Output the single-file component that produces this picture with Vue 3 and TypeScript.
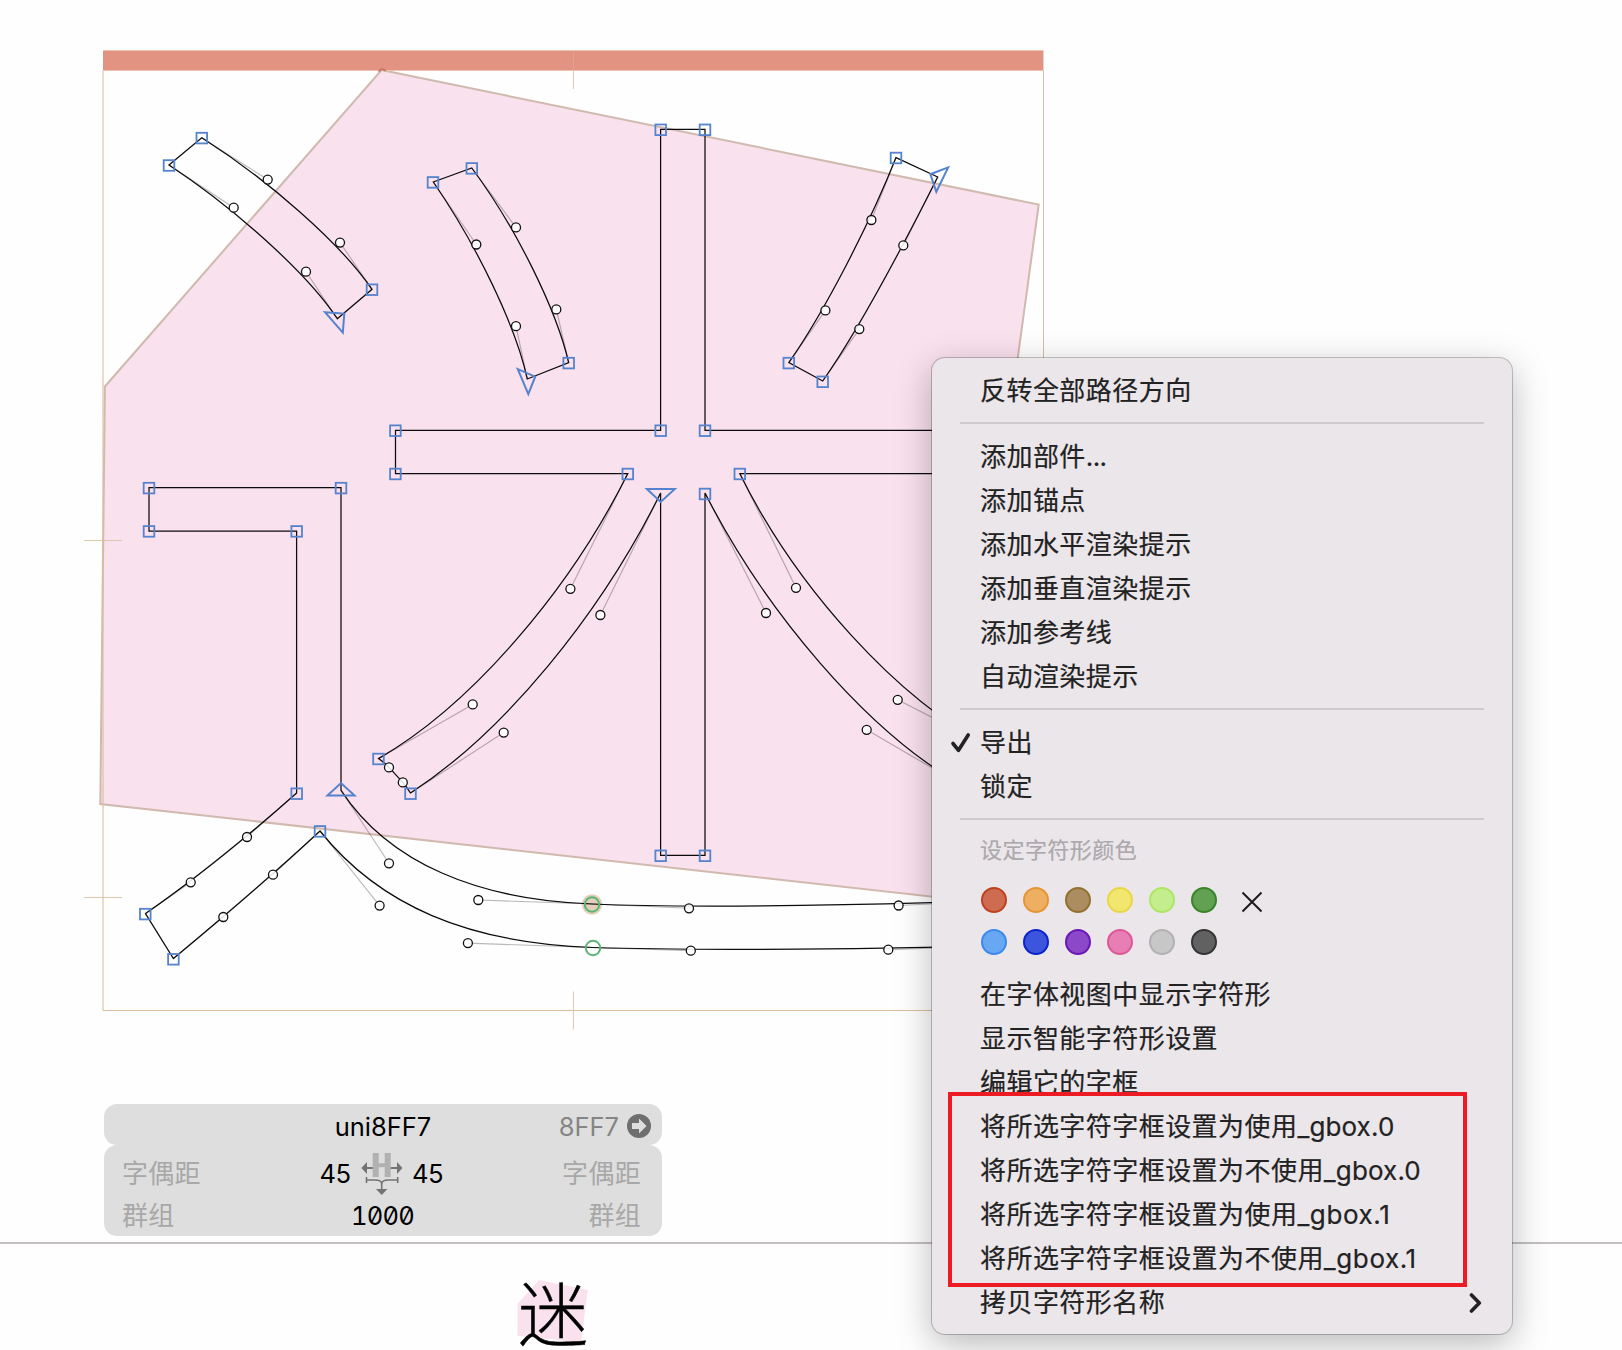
<script setup lang="ts">
type Point = [number, number]

interface Swatch {
  fill: string
  ring: string
}

const nodes: Point[] = [
  [201.8, 138.1], [169, 165.5], [372, 289.7],
  [433, 182.4], [471.8, 168.4], [568.7, 363.1],
  [896, 158], [822.7, 381.8], [788.8, 363.1],
  [660.7, 129.8], [705, 129.8], [660.7, 430.7], [705, 430.7],
  [395.4, 430.7], [395.4, 474], [627.8, 474], [739.8, 474],
  [705, 494], [660.7, 855.8], [705, 855.8],
  [378.5, 759], [410.5, 793.7],
  [149, 488.1], [341, 488.1], [149, 531.4], [296.7, 531.4],
  [296.7, 793.7], [145.3, 914.1], [173.4, 959.3], [320, 831.4],
]

/** Off-curve point followed by the on-curve point it belongs to. */
const handles: [Point, Point][] = [
  [[267.7, 179.6], [201.8, 137.7]],
  [[340, 242.6], [372, 289.3]],
  [[306, 271.7], [337.3, 318.7]],
  [[233.7, 207.7], [169, 165]],
  [[516, 227.4], [471.8, 168]],
  [[556.3, 309.4], [568.7, 362.7]],
  [[516, 326.2], [527.3, 379]],
  [[476.3, 244.5], [433.3, 182]],
  [[903.3, 245.4], [937.7, 177]],
  [[859.3, 329.1], [822.7, 381]],
  [[825.4, 310.4], [788.8, 362.6]],
  [[871.4, 220], [896, 157.6]],
  [[570.4, 588.8], [627.8, 473.5]],
  [[472.7, 704.4], [378.5, 758.6]],
  [[389, 767.4], [378.5, 758.6]],
  [[402.8, 782.4], [410.5, 793]],
  [[503.7, 732.6], [410.5, 793]],
  [[600.4, 615], [660.7, 493]],
  [[796, 587.8], [739.8, 473.5]],
  [[897.7, 699.8], [990, 747]],
  [[866.7, 729.8], [958, 783]],
  [[766, 613], [705, 493]],
  [[247, 837], [296.7, 793]],
  [[190.7, 882.3], [145.5, 913.6]],
  [[223.3, 917], [173.4, 958.6]],
  [[273, 874.7], [320, 831]],
  [[379.6, 905.6], [320, 831]],
  [[467.9, 943.1], [593, 947.5]],
  [[690.8, 950.7], [593, 947.5]],
  [[888.3, 949.7], [1040, 944]],
  [[389, 863.3], [341, 790.3]],
  [[478.3, 900], [592.3, 904]],
  [[689, 908.3], [592.3, 904]],
  [[898.6, 905.5], [1050, 898]],
]

const starts: string[] = [
  '325,312.2 344.3,313.6 342.8,332.6',
  '517.8,369.2 535.2,376.7 528.3,394.2',
  '948.2,167.4 930.4,174.2 936.3,191.8',
  '646.9,489 674.8,489 660.7,502',
  '327.5,795.4 354.5,795.4 341,783',
]

const outlines: string[] = [
  'M201.8 137.7C267.7 179.6 340 242.6 372 289.3L337.3 318.7C306 271.7 233.7 207.7 169 165Z',
  'M471.8 168C516 227.4 556.3 309.4 568.7 362.7L527.3 379C516 326.2 476.3 244.5 433.3 182Z',
  'M896 157.6L937.7 177C903.3 245.4 859.3 329.1 822.7 381L788.8 362.6C825.4 310.4 871.4 220 896 157.6Z',
  'M660.6 129.4H705V430.4H1010V473.5H739.8C796 587.8 897.7 699.8 990 747L958 783C866.7 729.8 766 613 705 493V855.4H660.6V493C600.4 615 503.7 732.6 410.5 793C408 789 406 786 402.8 782.4L389 767.4C386 764 382 761 378.5 758.6C472.7 704.4 570.4 588.8 627.8 473.5H395.5V430.4H660.6Z',
  'M149 487.5H341V790.3C389 863.3 478.3 900 592.3 904C689 908.3 898.6 905.5 1050 898V944C888.3 949.7 690.8 950.7 593 947.5C467.9 943.1 379.6 905.6 320 831C273 874.7 223.3 917 173.4 958.6L145.5 913.6C190.7 882.3 247 837 296.6 793V531H149Z',
]

const pathItems = ['添加锚点', '添加水平渲染提示', '添加垂直渲染提示', '添加参考线', '自动渲染提示']
const viewItems = ['在字体视图中显示字符形', '显示智能字符形设置', '编辑它的字框']
const boxItems = [
  { label: '将所选字符字框设置为使用', target: '_gbox.0', narrow: false },
  { label: '将所选字符字框设置为不使用', target: '_gbox.0', narrow: false },
  { label: '将所选字符字框设置为使用', target: '_gbox.1', narrow: true },
  { label: '将所选字符字框设置为不使用', target: '_gbox.1', narrow: true },
]

const swatches: Swatch[] = [
  { fill: '#cd6c50', ring: '#be4222' },
  { fill: '#eeaf62', ring: '#e69534' },
  { fill: '#ab8d5f', ring: '#937031' },
  { fill: '#f1e76e', ring: '#e8d744' },
  { fill: '#c4ee8e', ring: '#ade664' },
  { fill: '#62a053', ring: '#398426' },
  { fill: '#68a7f2', ring: '#3b89ea' },
  { fill: '#3d55dc', ring: '#0b23cc' },
  { fill: '#8b48c8', ring: '#6a17b8' },
  { fill: '#e87fb4', ring: '#dd5798' },
  { fill: '#c7c7c7', ring: '#b1b1b1' },
  { fill: '#616161', ring: '#343434' },
]
</script>

<template>
  <main class="editor">
    <svg class="canvas" width="1622" height="1104" viewBox="0 0 1622 1104">
      <path class="glyph-box" d="M381.5 70L1038.7 204.6L944 898L100.3 804L104.9 386.5Z" />
      <g class="metrics">
        <path d="M103 70V1010.5" stroke-width="2" opacity=".55" />
        <path d="M1043.5 70V1010.5M103 1010.5H1043.5" />
        <path d="M573.4 991.5V1029.5M84 540.5H122M84 897.5H122" opacity=".85" />
      </g>
      <rect x="103" y="50" width="940.3" height="21" fill="#ecc4b0" />
      <rect class="zone" x="103" y="51" width="940.3" height="19" />
      <path d="M378.500 71.500L381.500 69L386 70.500" class="vertex" />
      <path class="metrics" d="M573.4 51V71" opacity=".4" />
      <path class="metrics" d="M573.4 71V89" opacity=".85" />

      <circle class="selected" cx="592" cy="904.5" r="10.2" />
      <g class="handle-lines">
        <line v-for="([h, n], i) in handles" :key="i" :x1="h[0]" :y1="h[1]" :x2="n[0]" :y2="n[1]" />
      </g>
      <path v-for="d in outlines" :key="d" class="outline" :d="d" />
      <circle v-for="([h], i) in handles" :key="i" class="handle" :cx="h[0]" :cy="h[1]" r="4.5" />
      <rect v-for="(n, i) in nodes" :key="i" class="node" :x="n[0] - 5.3" :y="n[1] - 5.3" width="10.6" height="10.6" />
      <polygon v-for="p in starts" :key="p" class="node start" :points="p" />
      <circle class="smooth" cx="592" cy="904.5" r="7.2" />
      <circle class="smooth" cx="593" cy="948" r="7.2" />
    </svg>

    <section class="info">
      <header class="info-head">
        <span class="name">uni8FF7</span>
        <span class="code">8FF7</span>
        <svg class="go" width="24" height="24" viewBox="0 0 24 24">
          <circle cx="12" cy="12" r="12" fill="#6f6f6f" />
          <path d="M5 9H12V4.500L19.600 12L12 19.500V15H5Z" fill="#dedede" />
        </svg>
      </header>
      <div class="info-body">
        <div class="info-row">
          <span class="dim">字偶距</span>
          <span class="bearings">
            <b>45</b>
            <svg width="42" height="44" viewBox="0 0 42 44">
              <path d="M11.700 1H17.700V11.200H23.700V1H29.700V25H23.700V15.200H17.700V25H11.700Z" fill="#b1b1b1" />
              <g fill="#737373">
                <path d="M.4 16L6 10V15H11.700V17H6V22Z" />
                <path d="M41.400 16L36 10V15H29.700V17H36V22Z" />
                <path d="M15 37H26.400L20.700 43Z" />
              </g>
              <path d="M5.500 25V31M36.700 25V31M5.500 28H14Q20.700 28 20.700 32V38M36.700 28H27.500Q20.700 28 20.700 32" fill="none" stroke="#737373" stroke-width="1.600" />
            </svg>
            <b>45</b>
          </span>
          <span class="dim">字偶距</span>
        </div>
        <div class="info-row second">
          <span class="dim">群组</span>
          <b>1000</b>
          <span class="dim">群组</span>
        </div>
      </div>
    </section>

    <section class="preview">
      <div class="sample">
        <svg width="74" height="70" viewBox="0 0 74 70">
          <path d="M23.800 5L72.700 15L66 67.500L2.400 60.700L2.700 28.800Z" fill="#f9e1ed" />
        </svg>
        <span class="sample-char">迷</span>
      </div>
    </section>

    <nav class="menu">
      <div class="item">反转全部路径方向</div>
      <hr />
      <div class="item">添加部件<span class="dots">...</span></div>
      <div v-for="t in pathItems" :key="t" class="item">{{ t }}</div>
      <hr />
      <div class="item">
        <svg class="check" width="22" height="22" viewBox="0 0 22 22"><path d="M3 11.500L8.500 18.300L18.200 3" /></svg>
        导出
      </div>
      <div class="item">锁定</div>
      <hr />
      <div class="caption">设定字符形颜色</div>
      <div class="palette">
        <div class="swatches">
          <i v-for="s in swatches" :key="s.fill" :style="{ background: s.fill, borderColor: s.ring }"></i>
        </div>
        <svg class="clear" width="22" height="22" viewBox="0 0 22 22"><path d="M1.500 1.500L20.500 20.500M20.500 1.500L1.500 20.500" /></svg>
      </div>
      <div v-for="t in viewItems" :key="t" class="item">{{ t }}</div>
      <div v-for="(b, i) in boxItems" :key="i" class="item">{{ b.label }}<span class="latin" :class="{ narrow: b.narrow }">{{ b.target }}</span></div>
      <div class="item">
        拷贝字符形名称
        <svg class="chevron" width="14" height="22" viewBox="0 0 14 22"><path d="M2.500 3L10.300 11L2.500 19" /></svg>
      </div>
      <div class="callout"></div>
    </nav>
  </main>
</template>

<style>
body {
  margin: 0;
  background: #fefefe;
}
</style>

<style scoped>
.editor {
  position: relative;
  width: 1622px;
  height: 1350px;
  overflow: hidden;
  background: #fefefe;
  font-family: Inter, "Noto Sans CJK SC", sans-serif;
}
.canvas {
  display: block;
}
.metrics {
  fill: none;
  stroke: #d9bfa0;
  stroke-width: 1;
}
.zone {
  fill: #e29381;
}
.vertex {
  fill: none;
  stroke: #c97762;
  stroke-width: 2;
}
.glyph-box {
  fill: #f9e1ed;
  stroke: #d0b9ae;
  stroke-width: 2;
}
.outline {
  fill: none;
  stroke: #0c0c0c;
  stroke-width: 1.25;
}
.handle-lines {
  stroke: rgba(40, 20, 35, 0.3);
  stroke-width: 1.15;
}
.handle {
  fill: rgba(255, 255, 255, 0.88);
  stroke: #111;
  stroke-width: 1.3;
}
.node {
  fill: none;
  stroke: #5583cd;
  stroke-width: 1.8;
}
.start {
  stroke-width: 2;
}
.smooth {
  fill: none;
  stroke: #5bb574;
  stroke-width: 2;
}
.selected {
  fill: #e3cfbb;
}

.info {
  width: 558px;
  height: 132px;
  margin-left: 104px;
  font-size: 26px;
}
.info-head,
.info-body {
  background: #dedede;
  border-radius: 13px;
}
.info-head {
  display: grid;
  grid-template-columns: 1fr 200px 1fr 24px;
  align-items: center;
  box-sizing: border-box;
  height: 41px;
  padding: 2px 11px 0 35px;
}
.name {
  grid-column: 2;
  padding-top: 2px;
  text-align: center;
  font-size: 25.5px;
}
.code {
  padding: 2px 8px 0 0;
  text-align: right;
  font-size: 25.5px;
  color: #858585;
}
.info-body {
  box-sizing: border-box;
  height: 91px;
  padding: 8px 20px 0 18px;
}
.info-row {
  display: grid;
  grid-template-columns: 1fr auto 1fr;
  align-items: center;
  height: 40px;
  line-height: 41px;
}
.info-row b {
  font-weight: 400;
  font-feature-settings: "zero", "tnum";
  font-size: 25.5px;
  letter-spacing: -0.8px;
}
.info-row.second {
  height: 44px;
}
.second b {
  margin-left: 1px;
}
.dim {
  color: #a8a8a8;
  letter-spacing: 0.3px;
}
.dim:last-child {
  margin-right: 1px;
  text-align: right;
}
.bearings {
  display: flex;
  align-items: center;
  gap: 9px;
  height: 40px;
}
.bearings b:first-child {
  margin-left: -1px;
  margin-right: 1px;
}

.preview {
  margin-top: 6px;
  border-top: 2px solid #c3bfc3;
}
.sample {
  display: grid;
  width: 74px;
  margin: 31px 0 0 515px;
}
.sample > * {
  grid-area: 1 / 1;
}
.sample-char {
  margin-left: 3px;
  font: 300 70px/71px "Noto Sans CJK SC", sans-serif;
  color: #000;
  -webkit-text-stroke: 0.4px #000;
}

.menu {
  position: absolute;
  left: 932px;
  top: 358px;
  box-sizing: border-box;
  width: 580px;
  height: 976px;
  padding: 10px 28px;
  border-radius: 13px;
  background: #ebe6ea;
  box-shadow: 0 0 0 1px rgba(0, 0, 0, 0.22), 0 10px 36px rgba(0, 0, 0, 0.28);
  color: #222;
  font-size: 26px;
  letter-spacing: 0.45px;
  -webkit-text-stroke: 0.2px currentColor;
}
.item {
  position: relative;
  height: 44px;
  padding-left: 20px;
  line-height: 46px;
  white-space: nowrap;
}
.latin {
  letter-spacing: 0.12px;
}
.latin.narrow {
  letter-spacing: 0.6px;
}
.dots {
  letter-spacing: -0.6px;
}
hr {
  height: 2px;
  margin: 10px 0;
  border: 0;
  background: #cfcacf;
}
.caption {
  height: 40px;
  padding-left: 20px;
  font-size: 22px;
  line-height: 40px;
  color: #aca8ab;
}
.palette {
  display: flex;
  height: 85px;
  margin-top: 17px;
  padding-left: 21px;
}
.swatches {
  display: grid;
  grid-template-columns: repeat(6, 26px);
  grid-auto-rows: 26px;
  gap: 16px;
}
.swatches i {
  box-sizing: border-box;
  border: 2px solid;
  border-radius: 50%;
}
.clear {
  margin: 4px 0 0 24px;
}
.clear path {
  stroke: #1c1c1c;
  stroke-width: 2;
}
.check {
  position: absolute;
  left: -10px;
  top: 12px;
}
.chevron {
  position: absolute;
  right: 1px;
  top: 12px;
}
.check path,
.chevron path {
  fill: none;
  stroke: #222;
  stroke-width: 3.6;
  stroke-linecap: round;
  stroke-linejoin: round;
}
.callout {
  position: absolute;
  left: 16px;
  top: 734px;
  box-sizing: border-box;
  width: 519px;
  height: 195px;
  border: 4px solid #ed1c24;
}
</style>
